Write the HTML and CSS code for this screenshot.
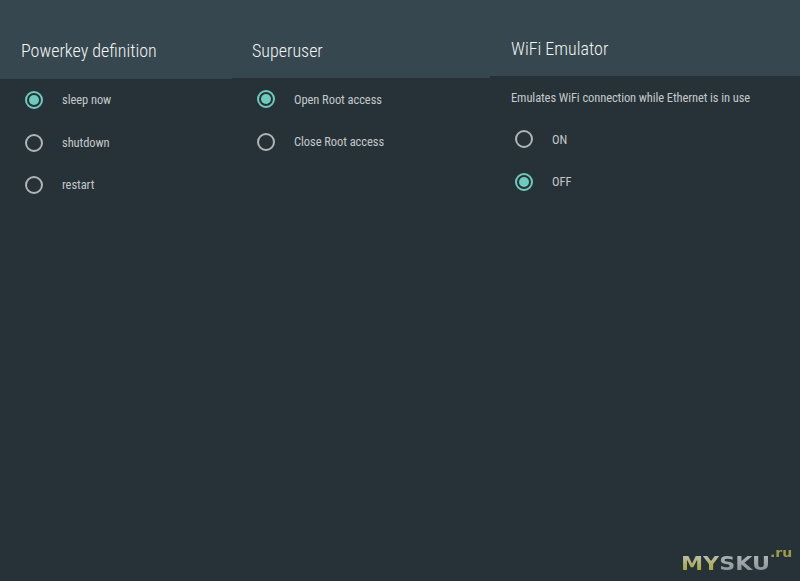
FILE: index.html
```html
<!DOCTYPE html>
<html lang="en">
<head>
<meta charset="utf-8">
<title>Settings</title>
<link rel="stylesheet" href="styles.css">
</head>
<body>
<main class="panels">
  <section class="panel panel-power">
    <header class="panel-head"><h2 class="panel-title">Powerkey definition</h2></header>
    <ul class="options">
      <li class="option"><span class="radio radio-on"></span><span class="label">sleep now</span></li>
      <li class="option"><span class="radio"></span><span class="label">shutdown</span></li>
      <li class="option"><span class="radio"></span><span class="label">restart</span></li>
    </ul>
  </section>
  <section class="panel panel-super">
    <header class="panel-head"><h2 class="panel-title">Superuser</h2></header>
    <ul class="options">
      <li class="option"><span class="radio radio-on"></span><span class="label">Open Root access</span></li>
      <li class="option"><span class="radio"></span><span class="label">Close Root access</span></li>
    </ul>
  </section>
  <section class="panel panel-wifi">
    <header class="panel-head"><h2 class="panel-title">WiFi Emulator</h2></header>
    <p class="desc">Emulates WiFi connection while Ethernet is in use</p>
    <ul class="options">
      <li class="option"><span class="radio"></span><span class="label">ON</span></li>
      <li class="option"><span class="radio radio-on"></span><span class="label">OFF</span></li>
    </ul>
  </section>
</main>
<div class="watermark"><span class="mark-my">MY</span><span class="mark-sku">SKU</span><span class="mark-ru">.ru</span></div>
</body>
</html>
```
FILE: styles.css
```css
* { box-sizing: border-box; }
html, body { margin: 0; padding: 0; }
body {
  width: 800px;
  height: 581px;
  overflow: hidden;
  position: relative;
  background: #263238;
  font-family: "Roboto", "Liberation Sans", sans-serif;
  font-stretch: condensed;
}
.panels { display: flex; height: 581px; }
.panel { flex: none; }
.panel-power { width: 232px; }
.panel-super { width: 258px; }
.panel-wifi { width: 310px; }
.panel-head {
  background: #37474f;
  display: flex;
  align-items: flex-end;
  padding-left: 21px;
}
.panel-power .panel-head { height: 79px; padding-bottom: 18px; }
.panel-super .panel-head { height: 78px; padding-left: 20px; padding-bottom: 17px; }
.panel-wifi .panel-head { height: 76px; padding-bottom: 17px; }
.panel-title {
  margin: 0;
  font-size: 18px;
  line-height: 20px;
  font-weight: 300;
  color: #f2f4f5;
  white-space: nowrap;
  letter-spacing: 0;
}
.options { list-style: none; margin: 0; padding: 0 0 0 25px; }
.option { display: flex; align-items: center; height: 42.5px; }
.panel-super .label, .panel-wifi .label { padding-top: 1px; }
.radio {
  width: 18px;
  height: 18px;
  border: 2px solid #b0b4b6;
  border-radius: 50%;
  flex: none;
  display: flex;
  align-items: center;
  justify-content: center;
}
.radio-on { border-color: #6fc9bd; }
.radio-on::after {
  content: "";
  width: 10px;
  height: 10px;
  border-radius: 50%;
  background: #6fc9bd;
}
.label {
  margin-left: 19px;
  font-size: 12.5px;
  line-height: 16px;
  color: #c4c8ca;
  white-space: nowrap;
  letter-spacing: -0.07px;
}
.desc {
  margin: 0;
  padding: 14px 0 0 21px;
  height: 42px;
  font-size: 12.5px;
  line-height: 16px;
  color: #c4c8ca;
  white-space: nowrap;
  letter-spacing: -0.1px;
}
.watermark {
  position: absolute;
  left: 681px;
  top: 553px;
  font-family: "DejaVu Sans", sans-serif;
  font-stretch: normal;
  font-size: 19px;
  line-height: 20px;
  font-weight: 700;
  white-space: nowrap;
  transform: scaleX(1.17);
  transform-origin: left center;
  filter: blur(0.4px);
}
.mark-my, .mark-sku {
  background-clip: text;
  -webkit-background-clip: text;
  color: transparent;
}
.mark-my { background-image: linear-gradient(#b8bca0 25%, #a8a83e 80%); }
.mark-sku { background-image: linear-gradient(#a9b0b4 25%, #8f989d 80%); }
.mark-ru {
  position: absolute;
  left: 76px;
  top: -10px;
  font-size: 12px;
  font-weight: 700;
  color: #9c9c4a;
}
```
